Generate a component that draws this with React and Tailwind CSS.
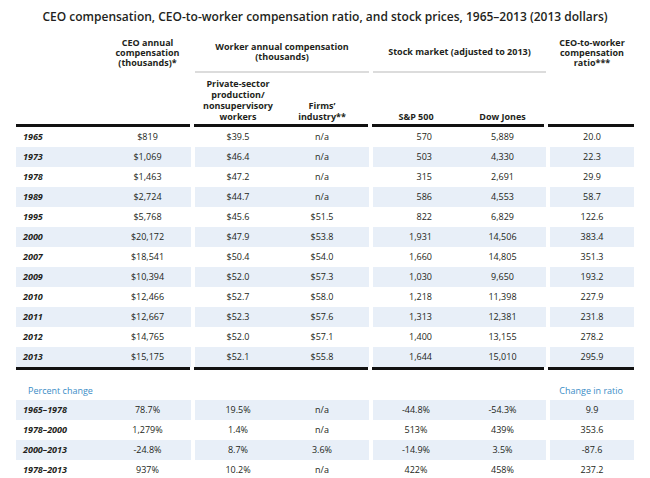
import React from 'react';

const rows = [
    ['1965', '$819', '$39.5', 'n/a', '570', '5,889', '20.0'],
    ['1973', '$1,069', '$46.4', 'n/a', '503', '4,330', '22.3'],
    ['1978', '$1,463', '$47.2', 'n/a', '315', '2,691', '29.9'],
    ['1989', '$2,724', '$44.7', 'n/a', '586', '4,553', '58.7'],
    ['1995', '$5,768', '$45.6', '$51.5', '822', '6,829', '122.6'],
    ['2000', '$20,172', '$47.9', '$53.8', '1,931', '14,506', '383.4'],
    ['2007', '$18,541', '$50.4', '$54.0', '1,660', '14,805', '351.3'],
    ['2009', '$10,394', '$52.0', '$57.3', '1,030', '9,650', '193.2'],
    ['2010', '$12,466', '$52.7', '$58.0', '1,218', '11,398', '227.9'],
    ['2011', '$12,667', '$52.3', '$57.6', '1,313', '12,381', '231.8'],
    ['2012', '$14,765', '$52.0', '$57.1', '1,400', '13,155', '278.2'],
    ['2013', '$15,175', '$52.1', '$55.8', '1,644', '15,010', '295.9'],
];

const changes = [
    ['1965–1978', '78.7%', '19.5%', 'n/a', '-44.8%', '-54.3%', '9.9'],
    ['1978–2000', '1,279%', '1.4%', 'n/a', '513%', '439%', '353.6'],
    ['2000–2013', '-24.8%', '8.7%', '3.6%', '-14.9%', '3.5%', '-87.6'],
    ['1978–2013', '937%', '10.2%', 'n/a', '422%', '458%', '237.2'],
];

function Row({ r, shaded, pct }) {
    const bg = shaded ? 'bg-[#e8eff8]' : 'bg-white';
    return (
        <div className="flex gap-[4px] h-[20px] text-[9px] leading-[20px]">
            <div className={`w-[175px] flex ${bg}`}>
                <div className="w-[88px] pl-[7px] font-bold italic">{r[0]}</div>
                <div className="w-[87px] text-center">{r[1]}</div>
            </div>
            <div className={`w-[174px] flex ${bg}`}>
                <div className="w-[86px] text-center">{r[2]}</div>
                <div className="w-[88px] text-center pr-[6px]">{r[3]}</div>
            </div>
            <div className={`w-[173px] flex ${bg}`}>
                <div className={`w-[86px] ${pct ? 'text-center' : 'text-right pr-[27px]'}`}>{r[4]}</div>
                <div className="w-[87px] text-center">{r[5]}</div>
            </div>
            <div className={`w-[86px] text-center ${bg}`}>{r[6]}</div>
        </div>
    );
}

function Rule() {
    return (
        <div className="flex gap-[4px]">
            <div className="w-[175px] h-[3px] bg-[#111]" />
            <div className="w-[174px] h-[3px] bg-[#111]" />
            <div className="w-[173px] h-[3px] bg-[#111]" />
            <div className="w-[86px] h-[3px] bg-[#111]" />
        </div>
    );
}

export default function App() {
    return (
        <div className="w-[650px] h-[478px] overflow-hidden bg-white text-[#231f20] font-['Open_Sans',sans-serif]">
            <h1 className="pt-[9px] h-[25px] text-center text-[12px] leading-[16px] font-semibold">
                CEO compensation, CEO-to-worker compensation ratio, and stock prices, 1965–2013 (2013 dollars)
            </h1>

            <div className="px-[16px] mt-[13px]">
                <div className="flex gap-[4px] h-[86px] text-[9px] font-bold">
                    <div className="w-[175px] flex">
                        <div className="w-[88px]" />
                        <div className="w-[87px] text-center leading-[10px]">
                            CEO annual compensation (thousands)*
                        </div>
                    </div>
                    <div className="w-[174px] flex flex-col">
                        <div className="pt-[4px] h-[33px] text-center leading-[10px]">
                            Worker annual compensation
                            <br />
                            (thousands)
                        </div>
                        <div className="h-[2px] bg-[#dcdcdc]" />
                        <div className="flex-1 flex items-end pb-[2px] leading-[11px]">
                            <div className="w-[86px] text-center">
                                Private-sector production/ nonsupervisory workers
                            </div>
                            <div className="w-[88px] text-center pr-[6px]">
                                Firms’
                                <br />
                                industry**
                            </div>
                        </div>
                    </div>
                    <div className="w-[173px] flex flex-col">
                        <div className="pt-[9px] h-[33px] text-center leading-[10px]">
                            Stock market (adjusted to 2013)
                        </div>
                        <div className="h-[2px] bg-[#dcdcdc]" />
                        <div className="flex-1 flex items-end pb-[2px] leading-[11px]">
                            <div className="w-[86px] text-center">S&amp;P 500</div>
                            <div className="w-[87px] text-center">Dow Jones</div>
                        </div>
                    </div>
                    <div className="w-[86px] text-center leading-[10px]">
                        CEO-to-worker compensation ratio***
                    </div>
                </div>

                <Rule />
                {rows.map((r, i) => (
                    <Row key={r[0]} r={r} shaded={i % 2 === 1} />
                ))}
                <Rule />

                <div className="flex gap-[4px] h-[30px] items-end pb-[3px] text-[9px] leading-[12px] text-[#3b8dc6]">
                    <div className="w-[175px] pl-[12px]">Percent change</div>
                    <div className="w-[174px]" />
                    <div className="w-[173px]" />
                    <div className="w-[86px] text-center">Change in ratio</div>
                </div>
                {changes.map((r, i) => (
                    <Row key={r[0]} r={r} shaded={i % 2 === 0} pct />
                ))}
            </div>
        </div>
    );
}
